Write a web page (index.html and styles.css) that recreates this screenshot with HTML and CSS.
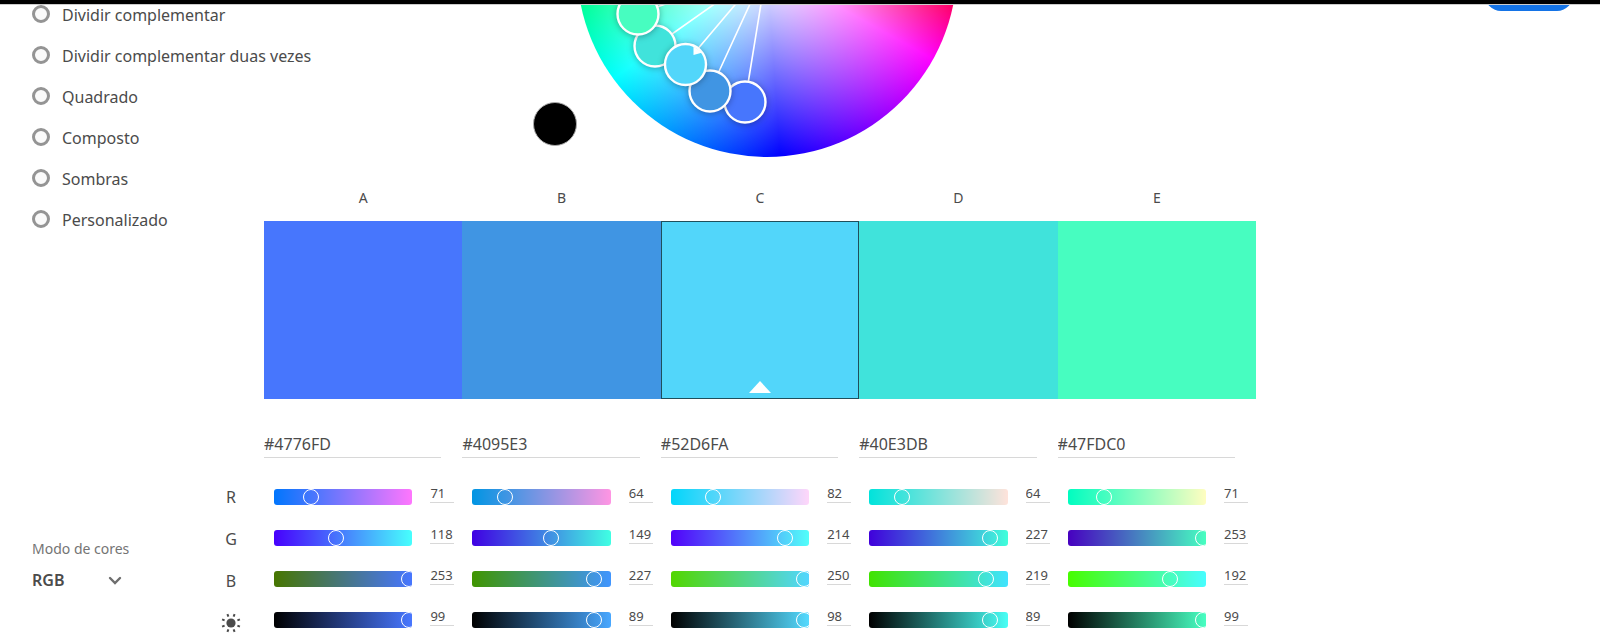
FILE: index.html
```
<!DOCTYPE html>
<html lang="pt">
<head>
<meta charset="utf-8">
<title>Roda de cores</title>
<link rel="stylesheet" href="styles.css">
</head>
<body>
<header class="topbar"></header>
<main class="page">
  <aside class="sidebar">
    <form class="rules">
      <label class="rule"><input type="radio" name="rule">Dividir complementar</label>
      <label class="rule"><input type="radio" name="rule">Dividir complementar duas vezes</label>
      <label class="rule"><input type="radio" name="rule">Quadrado</label>
      <label class="rule"><input type="radio" name="rule">Composto</label>
      <label class="rule"><input type="radio" name="rule">Sombras</label>
      <label class="rule"><input type="radio" name="rule">Personalizado</label>
    </form>
    <div class="mode">
      <label class="mode-label" for="mode">Modo de cores</label>
      <div class="mode-box">
        <select id="mode" class="mode-select"><option>RGB</option></select>
        <svg class="chevron" viewBox="0 0 14 9" aria-hidden="true"><path d="M2 2l5 5 5-5"/></svg>
      </div>
    </div>
  </aside>

  <section class="workspace">
    <div class="stage">
      <button class="marker" aria-label="Preto"></button>
      <div class="wheel">
        <svg class="handles" viewBox="0 0 380 380" aria-hidden="true">
          <g class="spokes">
            <path d="M190 190L61 237M190 190L78 269M190 190L108 287M190 190L133 314M190 190L168 325"/>
          </g>
          <g class="knobs">
            <circle cx="168" cy="325" r="20.5" fill="#4776FD"/>
            <circle cx="133" cy="314" r="20.5" fill="#4095E3"/>
            <circle cx="78" cy="269" r="20.5" fill="#40E3DB"/>
            <circle cx="61" cy="237" r="20.5" fill="#47FDC0"/>
            <circle cx="108.5" cy="287.5" r="20.5" fill="#52D6FA"/>
          </g>
          <path class="knob-tip" d="M116.500 269.500v8.500l9-2.500z"/>
        </svg>
      </div>
    </div>

    <div class="columns letters"><span>A</span><span>B</span><span>C</span><span>D</span><span>E</span></div>
    <div class="columns swatches">
      <button class="swatch c1" aria-label="A"></button>
      <button class="swatch c2" aria-label="B"></button>
      <button class="swatch c3 active" aria-label="C"><svg class="pointer" viewBox="0 0 22 12" aria-hidden="true"><path d="M11 0l11 12H0z"/></svg></button>
      <button class="swatch c4" aria-label="D"></button>
      <button class="swatch c5" aria-label="E"></button>
    </div>
    <div class="columns hexes">
      <input class="hex" aria-label="Hex A" value="#4776FD">
      <input class="hex" aria-label="Hex B" value="#4095E3">
      <input class="hex" aria-label="Hex C" value="#52D6FA">
      <input class="hex" aria-label="Hex D" value="#40E3DB">
      <input class="hex" aria-label="Hex E" value="#47FDC0">
    </div>
  </section>

  <div class="channels">
    <span>R</span><span>G</span><span>B</span>
    <span><svg class="sun" viewBox="0 0 20 20" aria-hidden="true"><circle cx="10" cy="10" r="4.6"/><path d="M12.6 3.6l1-2.5M16.4 7.4l2.5-1M16.4 12.6l2.5 1M12.6 16.4l1 2.5M7.4 16.4l-1 2.5M3.6 12.6l-2.5 1M3.6 7.4l-2.5-1M7.4 3.6l-1-2.5"/></svg></span>
  </div>

  <section class="columns editors">
    <div class="editor">
      <div class="track" style="--from:#0076FD;--to:#FF76FD"><input type="range" max="255" value="71" aria-label="A R"></div><input class="value" aria-label="A R valor" value="71">
      <div class="track" style="--from:#4700FD;--to:#47FFFD"><input type="range" max="255" value="118" aria-label="A G"></div><input class="value" aria-label="A G valor" value="118">
      <div class="track" style="--from:#477600;--to:#4776FF"><input type="range" max="255" value="253" aria-label="A B"></div><input class="value" aria-label="A B valor" value="253">
      <div class="track" style="--from:#000;--to:#4877FF"><input type="range" max="100" value="99" aria-label="A brilho"></div><input class="value" aria-label="A brilho valor" value="99">
    </div>
    <div class="editor">
      <div class="track" style="--from:#0095E3;--to:#FF95E3"><input type="range" max="255" value="64" aria-label="B R"></div><input class="value" aria-label="B R valor" value="64">
      <div class="track" style="--from:#4000E3;--to:#40FFE3"><input type="range" max="255" value="149" aria-label="B G"></div><input class="value" aria-label="B G valor" value="149">
      <div class="track" style="--from:#409500;--to:#4095FF"><input type="range" max="255" value="227" aria-label="B B"></div><input class="value" aria-label="B B valor" value="227">
      <div class="track" style="--from:#000;--to:#48A7FF"><input type="range" max="100" value="89" aria-label="B brilho"></div><input class="value" aria-label="B brilho valor" value="89">
    </div>
    <div class="editor">
      <div class="track" style="--from:#00D6FA;--to:#FFD6FA"><input type="range" max="255" value="82" aria-label="C R"></div><input class="value" aria-label="C R valor" value="82">
      <div class="track" style="--from:#5200FA;--to:#52FFFA"><input type="range" max="255" value="214" aria-label="C G"></div><input class="value" aria-label="C G valor" value="214">
      <div class="track" style="--from:#52D600;--to:#52D6FF"><input type="range" max="255" value="250" aria-label="C B"></div><input class="value" aria-label="C B valor" value="250">
      <div class="track" style="--from:#000;--to:#54DAFF"><input type="range" max="100" value="98" aria-label="C brilho"></div><input class="value" aria-label="C brilho valor" value="98">
    </div>
    <div class="editor">
      <div class="track" style="--from:#00E3DB;--to:#FFE3DB"><input type="range" max="255" value="64" aria-label="D R"></div><input class="value" aria-label="D R valor" value="64">
      <div class="track" style="--from:#4000DB;--to:#40FFDB"><input type="range" max="255" value="227" aria-label="D G"></div><input class="value" aria-label="D G valor" value="227">
      <div class="track" style="--from:#40E300;--to:#40E3FF"><input type="range" max="255" value="219" aria-label="D B"></div><input class="value" aria-label="D B valor" value="219">
      <div class="track" style="--from:#000;--to:#48FFF6"><input type="range" max="100" value="89" aria-label="D brilho"></div><input class="value" aria-label="D brilho valor" value="89">
    </div>
    <div class="editor">
      <div class="track" style="--from:#00FDC0;--to:#FFFDC0"><input type="range" max="255" value="71" aria-label="E R"></div><input class="value" aria-label="E R valor" value="71">
      <div class="track" style="--from:#4700C0;--to:#47FFC0"><input type="range" max="255" value="253" aria-label="E G"></div><input class="value" aria-label="E G valor" value="253">
      <div class="track" style="--from:#47FD00;--to:#47FDFF"><input type="range" max="255" value="192" aria-label="E B"></div><input class="value" aria-label="E B valor" value="192">
      <div class="track" style="--from:#000;--to:#48FFC2"><input type="range" max="100" value="99" aria-label="E brilho"></div><input class="value" aria-label="E brilho valor" value="99">
    </div>
  </section>

  <div class="actions"><button class="save" aria-label="Salvar"></button></div>
</main>
</body>
</html>
```
FILE: styles.css
```
* { box-sizing: border-box; }

body {
  margin: 0;
  background: #fff;
  color: #4b4b4b;
  font: 16px/20px "Noto Sans", "Open Sans", sans-serif;
  overflow: hidden;
}

button, input, select { font: inherit; color: inherit; }

.topbar {
  position: relative;
  z-index: 1;
  height: 5px;
  border-bottom: 1px solid #ccc;
  background: #000;
}

.page {
  display: grid;
  grid-template-columns: 13.5% 3% 62% 1fr;
  grid-template-rows: auto auto;
}

.sidebar {
  grid-column: 1 / 3;
  grid-row: 1 / 3;
  padding-left: 32px;
  white-space: nowrap;
}

.rules {
  display: flex;
  flex-direction: column;
  margin-top: -11px;
}

.rule {
  display: flex;
  align-items: center;
  gap: 12px;
  height: 41px;
}

.rule input {
  appearance: none;
  flex: none;
  width: 18px;
  height: 18px;
  margin: 0 0 2px;
  border: 3px solid #949494;
  border-radius: 50%;
  background: #fafafa;
}

.mode { margin-top: 299px; }

.mode-label {
  display: block;
  color: #747474;
  font-size: 14px;
}

.mode-box {
  display: flex;
  align-items: center;
  width: 90px;
  margin-top: 11px;
}

.mode-select {
  appearance: none;
  flex: 1;
  min-width: 0;
  padding: 0;
  border: 0;
  background: none;
  font-weight: 600;
}

.chevron {
  width: 14px;
  height: 9px;
  fill: none;
  stroke: #6e6e6e;
  stroke-width: 2.4;
  stroke-linecap: round;
}

.workspace { grid-column: 3; grid-row: 1; min-width: 0; }

.stage {
  display: flex;
  justify-content: center;
  align-items: flex-end;
  height: 152px;
  padding-right: 30px;
  overflow: hidden;
}

.marker {
  flex: none;
  width: 44px;
  height: 44px;
  margin-bottom: 11px;
  border: 1px solid #aaa;
  border-radius: 50%;
  background: #000;
}

.wheel {
  flex: none;
  width: 380px;
  height: 380px;
  border-radius: 50%;
  background:
    radial-gradient(closest-side, #fff, rgba(255, 255, 255, 0)),
    conic-gradient(#ff8a00, #f00 90deg, #f0f 119deg, #00f 176deg, #0ff 234deg, #0f8 262deg, #0f0 285deg, #ff0 330deg, #ff8a00);
}

.handles { display: block; overflow: visible; }
.spokes { stroke: #fff; stroke-width: 1.6; }
.knobs { stroke: #fff; stroke-width: 2.4; }
.knobs circle { filter: drop-shadow(0 1px 3px rgba(0, 0, 0, .3)); }
.knob-tip { fill: #fff; }

.columns {
  display: grid;
  grid-template-columns: repeat(5, minmax(0, 1fr));
}

.letters {
  padding: 31px 0 13px;
  font-size: 14px;
  text-align: center;
}

.swatches { height: 178px; }

.swatch {
  display: flex;
  justify-content: center;
  align-items: flex-end;
  padding: 0 0 5px;
  border: 0;
}

.c1 { background: #4776fd; }
.c2 { background: #4095e3; }
.c3 { background: #52d6fa; }
.c4 { background: #40e3db; }
.c5 { background: #47fdc0; }
.active { border: 1px solid #1f4f5c; }
.pointer { width: 22px; height: 12px; fill: #fff; }

.hexes { padding-top: 31px; }

.hex {
  width: calc(100% - 21px);
  height: 28px;
  padding: 0;
  border: 0;
  border-bottom: 1px solid #d8d8d8;
  background: none;
}

.channels {
  grid-column: 2;
  grid-row: 2;
  display: grid;
  grid-auto-rows: 42px;
  align-items: center;
  justify-items: center;
  padding: 18px 18px 0 0;
}

.channels span { display: flex; }
.sun { width: 20px; height: 20px; fill: #4b4b4b; stroke: #4b4b4b; stroke-width: 2; }
.sun circle { stroke: none; }

.editors { grid-column: 3; grid-row: 2; padding-top: 18px; }

.editor {
  display: grid;
  grid-template-columns: minmax(0, 1fr) 24px;
  grid-auto-rows: 41px;
  column-gap: 18px;
  align-items: center;
  padding: 0 8px 0 10px;
}

.track {
  height: 16px;
  border-radius: 3px;
  background: linear-gradient(90deg, var(--from), var(--to));
  overflow: hidden;
}

.track input {
  appearance: none;
  display: block;
  width: calc(100% + 16px);
  height: 16px;
  margin: 0 0 0 -10px;
  background: none;
}

.track input::-webkit-slider-thumb {
  appearance: none;
  width: 16px;
  height: 16px;
  border: 1px solid #fff;
  border-radius: 50%;
  background: transparent;
}

.value {
  width: 24px;
  height: 20px;
  margin-bottom: 8px;
  padding: 1px 0 0;
  border: 0;
  border-bottom: 1px solid #d8d8d8;
  background: none;
  font-size: 13px;
}

.actions {
  grid-column: 4;
  grid-row: 1;
  padding-right: 27px;
  height: 6px;
  display: flex;
  justify-content: flex-end;
  align-items: flex-end;
  overflow: hidden;
}

.save {
  flex: none;
  width: 88px;
  height: 32px;
  border: 0;
  border-radius: 16px;
  background: #1473e6;
}
```
